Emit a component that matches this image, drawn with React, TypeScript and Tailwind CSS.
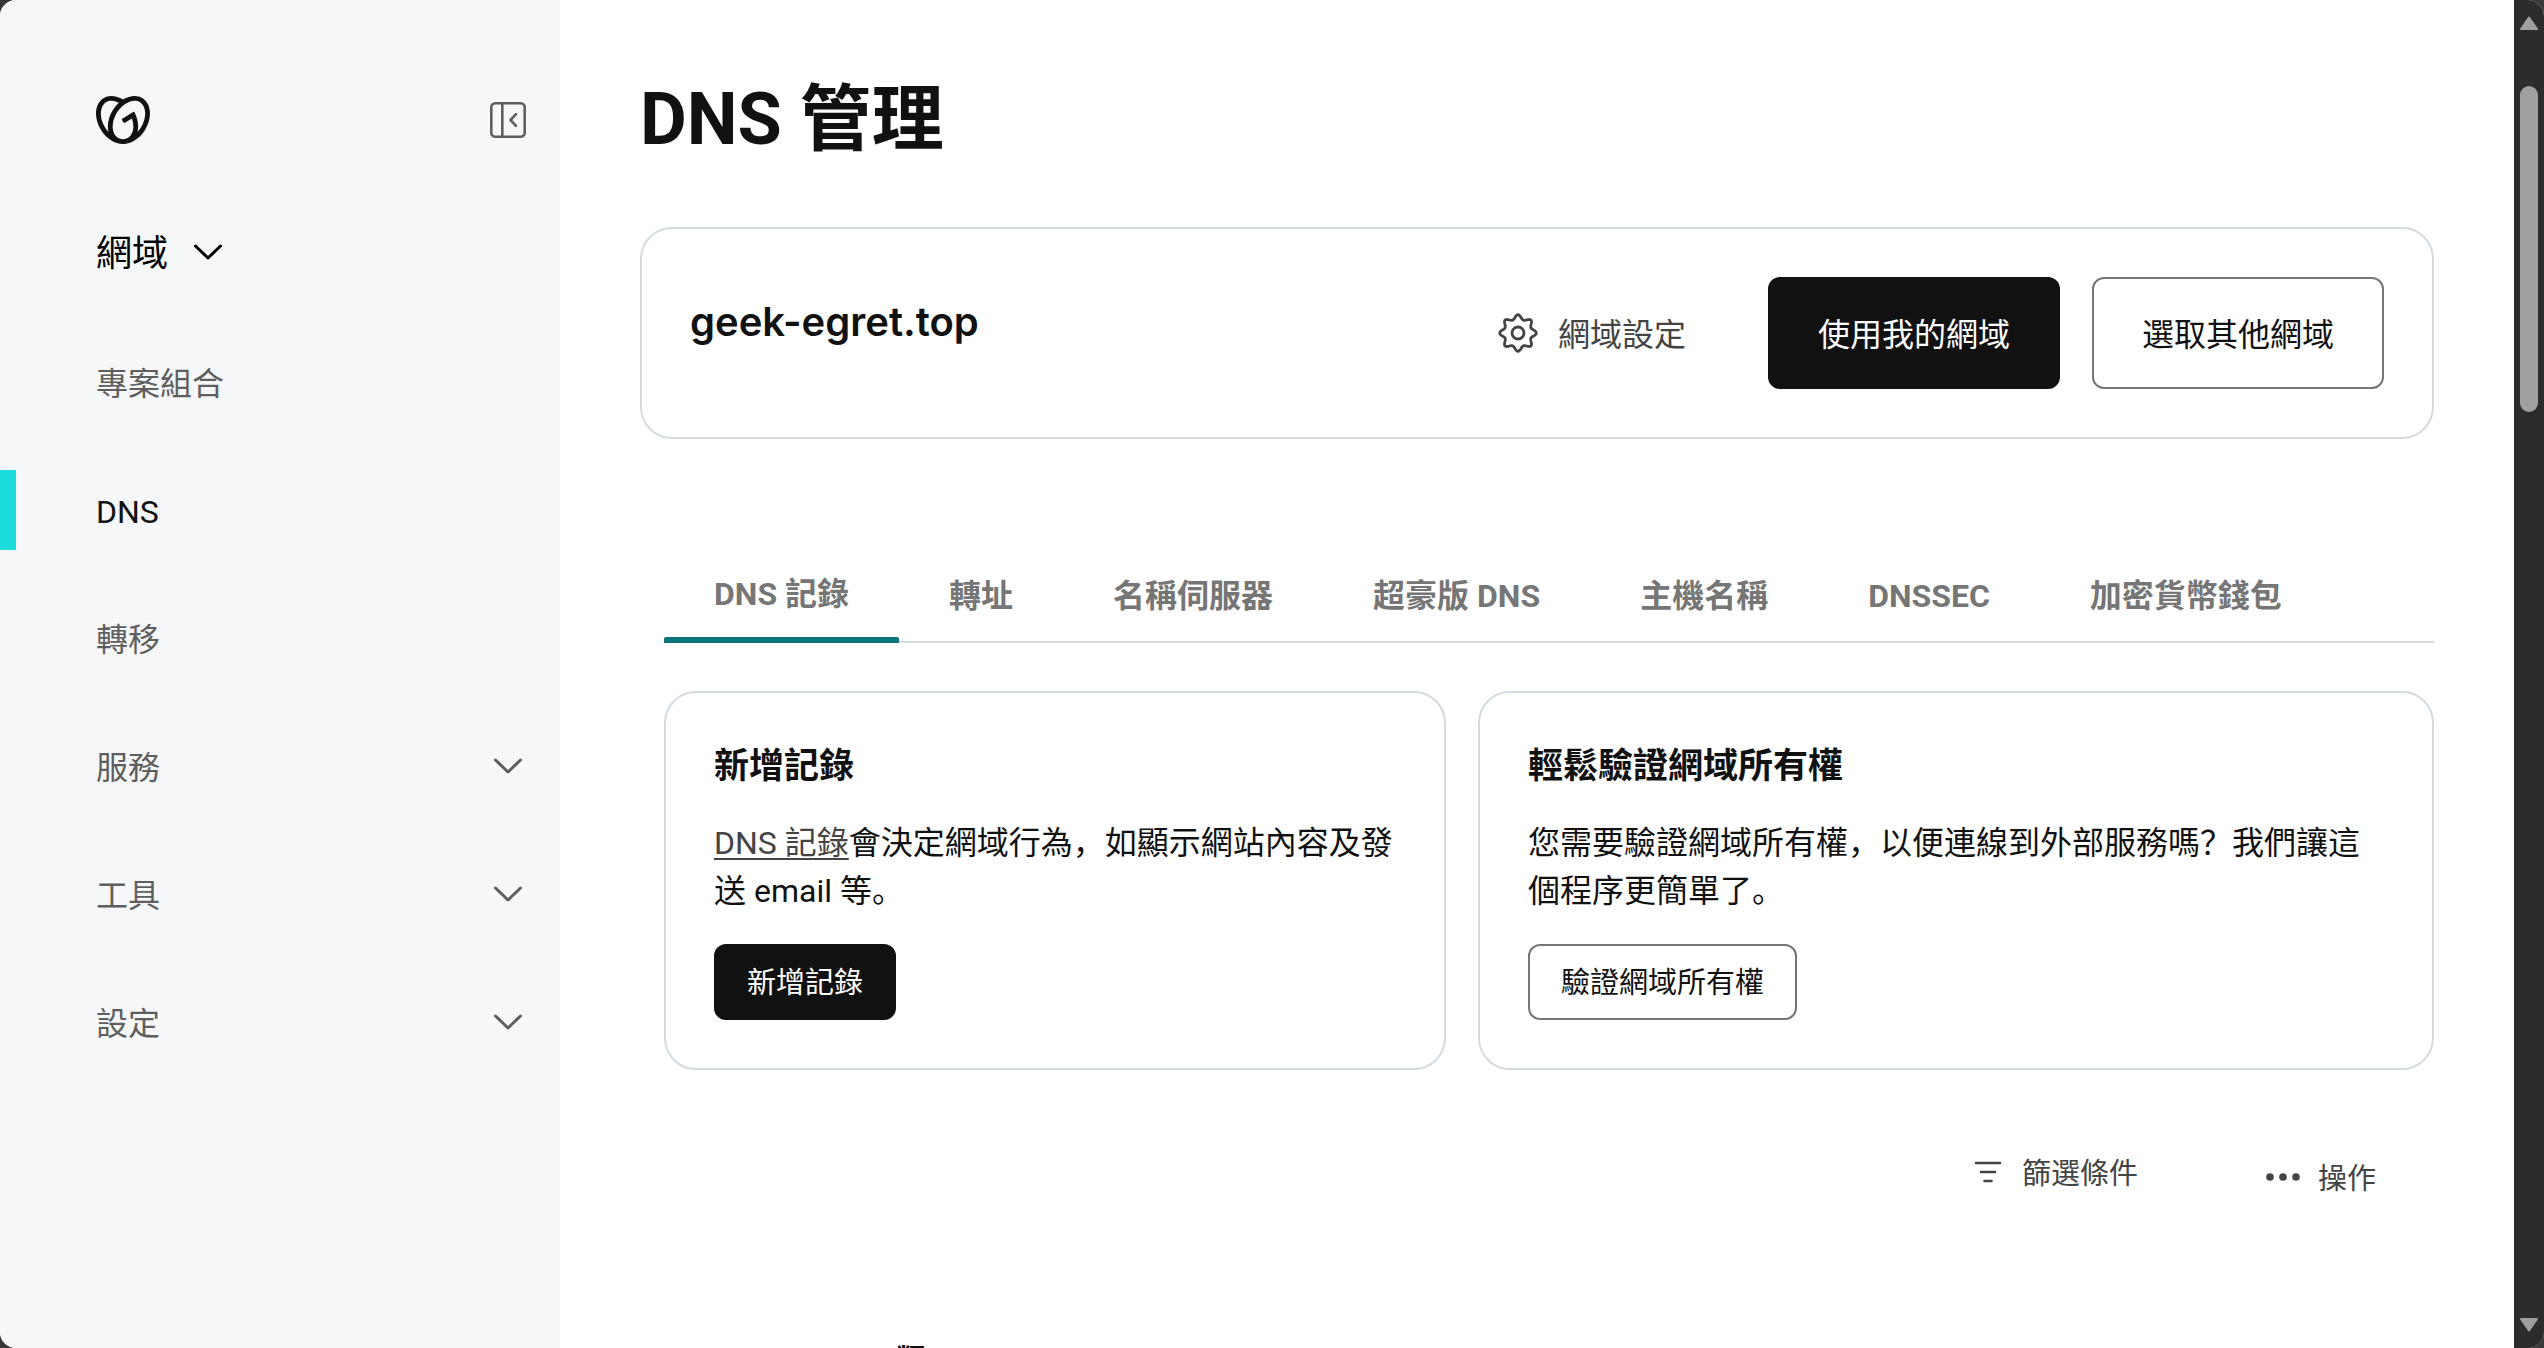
import { SiGodaddy } from "react-icons/si";

function ChevronDown({ className }: { className?: string }) {
  return (
    <svg viewBox="0 0 32 20" className={className} fill="none" stroke="currentColor" strokeWidth="3" strokeLinecap="round" strokeLinejoin="round" aria-hidden="true">
      <path d="M3.5 2 16 14 28.5 2" />
    </svg>
  );
}

function CollapseIcon() {
  return (
    <svg viewBox="0 0 36 36" className="size-9" fill="none" stroke="currentColor" strokeWidth="2.6" strokeLinecap="round" strokeLinejoin="round" aria-hidden="true">
      <rect x="1.3" y="1.3" width="33.4" height="33.4" rx="4" />
      <path d="M12.3 1.3v33.4M26 12.2 20.5 18l5.5 5.8" />
    </svg>
  );
}

// Outline of the cog: a circle whose radius swings eight times per turn.
const cogPoints = Array.from({ length: 160 }, (_, i) => {
  const angle = (i / 160) * Math.PI * 2;
  const wave = Math.cos(angle * 8);
  const radius = 16.1 + 2.2 * wave;
  const theta = angle - 0.02 * Math.sin(angle * 8);
  return `${(24 + radius * Math.sin(theta)).toFixed(2)},${(24 - radius * Math.cos(theta)).toFixed(2)}`;
}).join(" ");

function GearIcon() {
  return (
    <svg viewBox="0 0 48 48" className="size-12" fill="none" stroke="currentColor" strokeWidth="2.8" strokeLinejoin="round" aria-hidden="true">
      <circle cx="24" cy="24" r="6" />
      <polygon points={cogPoints} />
    </svg>
  );
}

function FilterIcon() {
  return (
    <svg viewBox="0 0 28 26" className="h-[26px] w-7" stroke="currentColor" strokeWidth="2.5" strokeLinecap="round" aria-hidden="true">
      <path d="M2 2h24M7 11h14M10.5 20h7" />
    </svg>
  );
}

function DotsIcon() {
  return (
    <svg viewBox="0 0 34 12" className="h-3 w-[34px]" fill="currentColor" aria-hidden="true">
      <circle cx="4" cy="4" r="3.8" />
      <circle cx="17" cy="4" r="3.8" />
      <circle cx="30" cy="4" r="3.8" />
    </svg>
  );
}

const navItems = [
  { label: "專案組合" },
  { label: "DNS", active: true },
  { label: "轉移" },
  { label: "服務", expandable: true },
  { label: "工具", expandable: true },
  { label: "設定", expandable: true },
];

const tabs = ["DNS 記錄", "轉址", "名稱伺服器", "超豪版 DNS", "主機名稱", "DNSSEC", "加密貨幣錢包"];

function Sidebar() {
  return (
    <aside className="w-[560px] shrink-0 bg-[#f5f7f8] text-[#5e5e5e]">
      <div className="flex h-60 items-center justify-between pr-[34px] pl-24">
        <a href="#home" aria-label="GoDaddy" className="text-[#111111]">
          <SiGodaddy className="size-[54px]" />
        </a>
        <button type="button" aria-label="Collapse">
          <CollapseIcon />
        </button>
      </div>
      <button type="button" className="-mt-4 flex h-14 items-center gap-6 pt-1 pl-24 text-4xl text-black">
        網域
        <ChevronDown className="h-5 w-8" />
      </button>
      <nav className="mt-[62px] flex flex-col gap-12">
        {navItems.map((item) =>
          item.expandable ? (
            <button key={item.label} type="button" className="flex h-20 items-center justify-between pt-1 pr-9 pl-24">
              {item.label}
              <ChevronDown className="h-5 w-8" />
            </button>
          ) : (
            <a
              key={item.label}
              href="#nav"
              className={
                item.active
                  ? "flex h-20 items-center border-l-16 border-[#1bdbdb] pt-1 pl-20 text-[#111111]"
                  : "flex h-20 items-center pt-1 pl-24"
              }
            >
              {item.label}
            </a>
          ),
        )}
      </nav>
    </aside>
  );
}

function DomainCard() {
  return (
    <section className="flex items-start justify-between rounded-[32px] border-2 border-[#d4dbe0] p-12">
      <h2 className="font-['Inter',sans-serif] text-[40px] leading-[90px] font-semibold">geek-egret.top</h2>
      <div className="flex items-center gap-8">
        <button type="button" className="mr-[50px] flex items-center gap-4 text-[#444444]">
          <GearIcon />
          <span className="pt-1">網域設定</span>
        </button>
        <button type="button" className="h-28 rounded-xl border-2 border-[#111111] bg-[#111111] px-12 pt-1 text-white">
          使用我的網域
        </button>
        <button type="button" className="h-28 rounded-xl border-2 border-[#767676] px-12 pt-1">
          選取其他網域
        </button>
      </div>
    </section>
  );
}

function TabBar() {
  return (
    <div role="tablist" className="mt-[120px] flex h-[84px] border-b-2 border-[#d4dbe0] font-bold text-[#767676]">
      {tabs.map((tab, index) =>
        index === 0 ? (
          <button key={tab} type="button" role="tab" aria-selected="true" className="relative h-[82px] px-[50px] pb-3 whitespace-nowrap">
            {tab}
            <span className="absolute inset-x-0 -bottom-0.5 h-1.5 rounded-t-xs bg-[#09757a]" />
          </button>
        ) : (
          <button key={tab} type="button" role="tab" aria-selected="false" className="h-[82px] px-[50px] pb-2 whitespace-nowrap">
            {tab}
          </button>
        ),
      )}
    </div>
  );
}

function Cards() {
  return (
    <div className="mt-12 grid grid-cols-[45fr_55fr] gap-8">
      <section className="rounded-[32px] border-2 border-[#d4dbe0] p-12">
        <h3 className="text-[35px] leading-[52px] font-bold">新增記錄</h3>
        <p className="mt-[26px] leading-[48px]">
          <a href="#records" className="text-[#444444] underline decoration-2 underline-offset-4">
            DNS 記錄
          </a>
          會決定網域行為，如顯示網站內容及發送 email 等。
        </p>
        <button type="button" className="mt-[29px] h-[76px] rounded-xl border-2 border-[#111111] bg-[#111111] px-[31px] pt-1 text-[29px] text-white">
          新增記錄
        </button>
      </section>
      <section className="rounded-[32px] border-2 border-[#d4dbe0] p-12">
        <h3 className="text-[35px] leading-[52px] font-bold">輕鬆驗證網域所有權</h3>
        <p className="mt-[26px] leading-[48px]">
          您需要驗證網域所有權，以便連線到外部服務嗎？我們讓這個程序更簡單了。
        </p>
        <button type="button" className="mt-[29px] h-[76px] rounded-xl border-2 border-[#767676] px-[31px] pt-1 text-[29px]">
          驗證網域所有權
        </button>
      </section>
    </div>
  );
}

function Records() {
  return (
    <>
      <div className="mt-20 flex items-start justify-end pr-[58px] text-[29px] leading-[48px] text-[#444444]">
        <button type="button" className="flex items-center gap-5">
          <FilterIcon />
          篩選條件
        </button>
        <button type="button" className="mt-[5px] ml-32 flex items-center gap-[18px]">
          <DotsIcon />
          操作
        </button>
      </div>
      <table className="mt-[133px] ml-[232px]">
        <thead>
          <tr>
            <th className="text-[29px] leading-[48px] font-bold">類</th>
          </tr>
        </thead>
      </table>
    </>
  );
}

function ScrollBar() {
  return (
    <div className="flex w-[30px] shrink-0 flex-col items-center bg-[#2c2c2c] pt-4 pb-4 text-[#9f9f9f]">
      <svg viewBox="0 0 18 14" className="h-3.5 w-[18px] shrink-0" fill="currentColor" stroke="currentColor" strokeWidth="2" strokeLinejoin="round" aria-hidden="true">
        <path d="M9 1.5 17 13H1z" />
      </svg>
      <div className="mt-14 h-[326px] w-[18px] shrink-0 rounded-full bg-[#9f9f9f]" />
      <svg viewBox="0 0 18 14" className="mt-auto h-3.5 w-[18px] shrink-0" fill="currentColor" stroke="currentColor" strokeWidth="2" strokeLinejoin="round" aria-hidden="true">
        <path d="M1 1h16L9 12.5z" />
      </svg>
    </div>
  );
}

export default function App() {
  return (
    <div className="h-screen overflow-hidden bg-[#383838] font-['Roboto','Noto_Sans_CJK_SC',sans-serif] text-[32px] text-[#111111]">
      <div className="flex h-full overflow-hidden rounded-2xl bg-white">
        <Sidebar />
        <main className="min-w-0 flex-1 overflow-hidden pr-20 pl-20">
          <h1 className="pt-[70px] text-[72px] leading-[100px] font-bold">DNS 管理</h1>
          <div className="mt-[57px]">
            <DomainCard />
          </div>
          <div className="ml-6">
            <TabBar />
            <Cards />
            <Records />
          </div>
        </main>
        <ScrollBar />
      </div>
    </div>
  );
}
